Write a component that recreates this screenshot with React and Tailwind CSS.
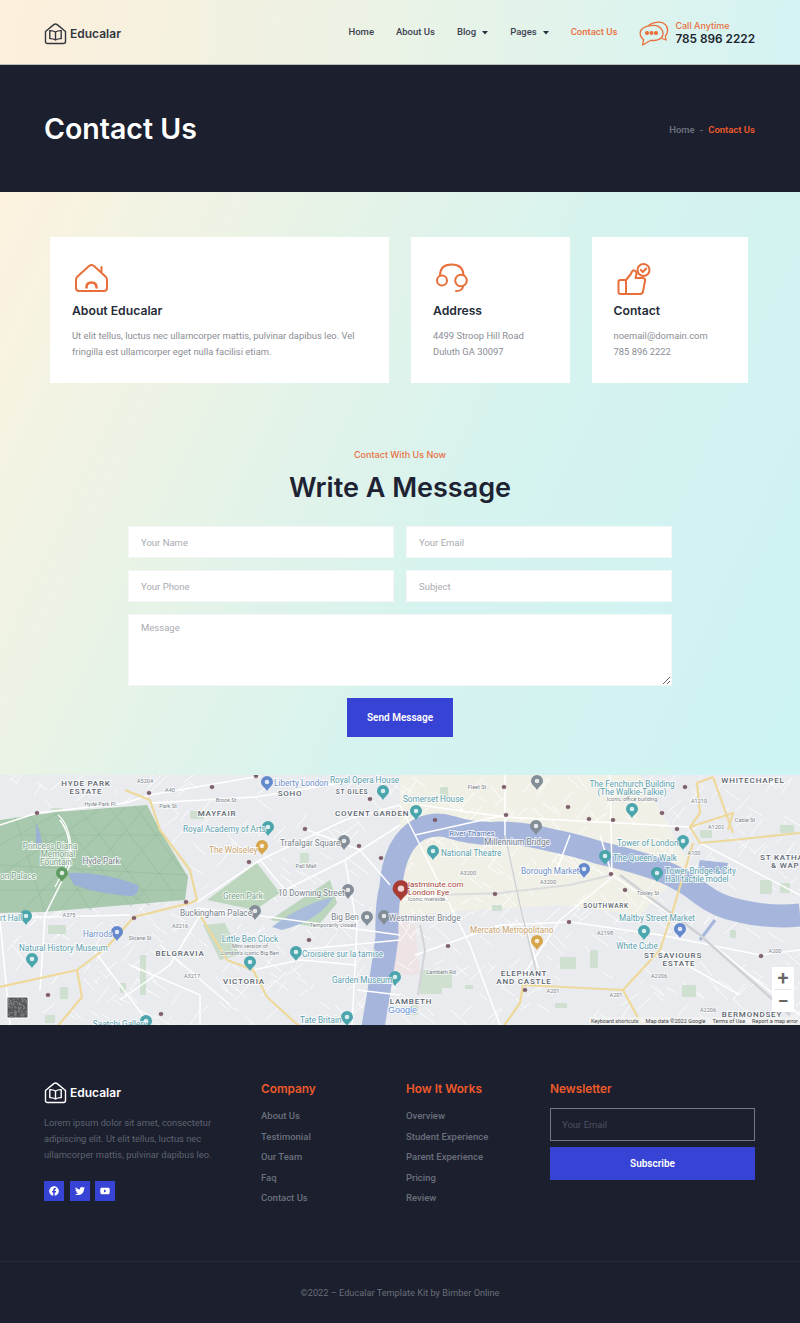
import { FaFacebook, FaTwitter, FaYoutube } from "react-icons/fa";

const ORANGE = "#e96f3a";

function Logo({ color }) {
  return (
    <svg width="23" height="22" viewBox="0 0 23 22" fill="none" stroke={color} strokeWidth="1.4" strokeLinejoin="round" strokeLinecap="round">
      <path d="M1.5 8.5 L9.8 1.6 Q11.5 0.5 13.2 1.6 L21.5 8.5 V18.5 Q21.5 20.5 19.5 20.5 H3.5 Q1.5 20.5 1.5 18.5 Z" />
      <path d="M11.5 9 Q9 7.4 5.8 7.6 V15.6 Q9 15.4 11.5 17 Q14 15.4 17.2 15.6 V7.6 Q14 7.4 11.5 9 V17" />
    </svg>
  );
}

function ChatIcon() {
  return (
    <svg width="30" height="26" viewBox="0 0 30 26" fill="none" stroke={ORANGE} strokeWidth="1.3" strokeLinecap="round" strokeLinejoin="round">
      <path d="M10 4 Q15 0.5 21 1.2 Q28 2.2 28.6 9 Q28.8 12.5 26.3 15 L27 19 L23 17.5" />
      <path d="M12 4.6 Q20 3.6 23.4 9.5 Q25.5 15 20.5 18.2 Q17 20 12 19.3 L3.6 24 L4.6 18.6 Q0.8 15.5 1.2 11.5 Q2 5.6 12 4.6 Z" />
      <circle cx="8" cy="12" r="1.4" fill={ORANGE} />
      <circle cx="12.5" cy="12" r="1.4" fill={ORANGE} />
      <circle cx="17" cy="12" r="1.4" fill={ORANGE} />
    </svg>
  );
}

function HouseIcon() {
  return (
    <svg width="33" height="30" viewBox="0 0 33 30" fill="none" stroke={ORANGE} strokeWidth="2" strokeLinecap="round" strokeLinejoin="round">
      <path d="M2 14 L14 3 Q16.500 1 19 3 L31 14 Q32 15.500 32 17 V25 Q32 28 29 28 H4 Q1 28 1 25 V17 Q1 15.500 2 14 Z" />
      <path d="M26.500 8.500 V4" />
      <path d="M11.500 24.500 Q11.500 19.500 16.500 19.500 Q21.500 19.500 21.500 24.500" strokeWidth="2.600" />
    </svg>
  );
}

function HeadsetIcon() {
  return (
    <svg width="33" height="30" viewBox="0 0 33 30" fill="none" stroke={ORANGE} strokeWidth="2" strokeLinecap="round" strokeLinejoin="round">
      <path d="M4 12.500 Q4 1.500 15.500 1.500 Q27 1.500 27.500 12" />
      <circle cx="6" cy="17.500" r="5" />
      <circle cx="25" cy="17.500" r="5.800" />
      <path d="M27 23.500 Q26.500 28 20 28" />
    </svg>
  );
}

function ThumbIcon() {
  return (
    <svg width="34" height="33" viewBox="0 0 34 33" fill="none" stroke={ORANGE} strokeWidth="2" strokeLinecap="round" strokeLinejoin="round">
      <path d="M9 17 H3.500 Q1.500 17 1.500 19 V29 Q1.500 31 3.500 31 H9 Z" />
      <path d="M9 17 L13.500 11.500 Q15 8 16 7.500 Q19.500 7 19.500 11 L18.500 15 H26 Q28.500 15.500 28 18 L26 28.500 Q25.500 31 23 31 H9" />
      <circle cx="26.500" cy="7" r="6" />
      <path d="M23.800 7 L25.800 9 L29.200 5.500" />
    </svg>
  );
}

function Caret() {
  return (
    <svg width="6" height="4" viewBox="0 0 6 4" className="ml-[6px] inline-block">
      <path d="M0 0 H6 L3 3.500 Z" fill="#2b3040" />
    </svg>
  );
}

// ---- map data, coordinates in px inside the 800x250 map ----
const YELLOW_ROADS = [
  "M125 15 L150 25 L160 55 L190 95 L197 125 L190 128 L134 142 L107 172 L77 195 L0 212",
  "M197 135 L227 185 L253 195 L267 222 L300 252",
  "M77 195 L82 222 L57 252",
  "M713 2 L697 8 L700 38 L690 52 L700 68 L733 65 L800 58",
  "M713 2 L733 58",
  "M693 68 L673 135 L660 175 L623 215 L523 210 L520 228 L503 252",
  "M623 215 L643 252",
  "M690 52 L733 38 L728 55",
];

const WHITE_ROADS = [
  "M0 50 L37 38 L125 28 L150 20 L260 1",
  "M150 28 L255 22 L340 8",
  "M197 127 L260 85 L345 45 L400 30",
  "M260 85 L285 115 L345 85 L400 50",
  "M197 133 L270 142 L400 160",
  "M345 85 L357 150 L352 252",
  "M305 54 L360 75 L390 110",
  "M400 30 L435 100 L470 170 L500 250",
  "M60 45 Q72 60 70 90 L45 140 L40 215",
  "M0 143 L130 140",
  "M0 145 L10 250",
  "M297 175 L400 165",
  "M253 195 L300 185 L357 190",
  "M357 215 L400 220",
  "M505 0 L505 60 L520 130 L540 200",
  "M420 30 L505 42 L620 48 L690 52",
  "M415 60 L505 40",
  "M610 0 L612 100",
  "M570 60 L555 100",
  "M615 100 L560 145 L520 205",
  "M440 120 L500 118 L570 110 L612 100 L700 160 L800 240",
  "M400 125 L440 120",
  "M570 147 L660 160 L760 180 L800 175",
  "M415 180 L500 150 L570 147",
  "M612 100 L600 60",
  "M660 175 L740 220",
  "M700 68 L800 120",
  "M130 190 L200 220 L200 250",
  "M90 170 L150 250",
  "M160 170 L230 230",
  "M200 140 L170 190 L120 225",
];

// thin side streets, same result on every render
function sideStreets() {
  let seed = 42;
  const rnd = () => {
    seed = (seed * 9301 + 49297) % 233280;
    return seed / 233280;
  };
  const out = [];
  for (let i = 0; i < 620; i++) {
    const x = rnd() * 800;
    const y = rnd() * 250;
    const a = rnd() > 0.5 ? 0.5 + rnd() * 0.4 : -1 + rnd() * 0.4;
    const l = 6 + rnd() * 16;
    out.push(`M${x.toFixed(0)} ${y.toFixed(0)} L${(x + l * Math.cos(a)).toFixed(0)} ${(y + l * Math.sin(a)).toFixed(0)}`);
  }
  return out;
}

const SIDE_STREETS = sideStreets();

// speckles for the little satellite thumbnail
function satelliteSpots() {
  let seed = 7;
  const out = [];
  for (let i = 0; i < 70; i++) {
    seed = (seed * 9301 + 49297) % 233280;
    const x = 8 + (seed % 19);
    seed = (seed * 9301 + 49297) % 233280;
    const y = 223 + (seed % 19);
    out.push([x, y, seed % 2 ? "#7d8080" : "#2f3232"]);
  }
  return out;
}

const SAT_SPOTS = satelliteSpots();

const PARK_PATHS = [
  "M15 42 L45 137 M30 40 L90 135 M55 38 L130 130 M80 35 L150 125 M110 33 L175 120 M135 31 L185 100",
  "M147 30 L60 135 M125 33 L20 138 M160 55 L90 135 M175 80 L130 132 M100 34 L0 100 M60 37 L0 70",
  "M0 90 L188 100 M0 115 L186 115 M20 60 L165 60 M60 85 L150 130",
];

const GREEN_BLOCKS = [
  [51, 33, 12, 9], [190, 36, 14, 8], [300, 78, 9, 10], [48, 150, 18, 9], [140, 180, 6, 40], [60, 212, 8, 12],
  [45, 240, 10, 8], [440, 12, 8, 12], [492, 130, 10, 6], [560, 182, 16, 12], [440, 197, 12, 16], [555, 228, 12, 5],
  [590, 175, 8, 18], [760, 105, 12, 14], [780, 108, 10, 10], [682, 210, 14, 12], [700, 55, 12, 8], [780, 50, 14, 8],
  [730, 155, 6, 8], [465, 210, 8, 4], [410, 230, 8, 10], [120, 208, 6, 10], [420, 195, 22, 24],
];

const TUBE = [
  [37, 38], [149, 18], [212, 12], [256, 1], [305, 54], [359, 71], [370, 24], [381, 83], [249, 87], [186, 127],
  [134, 143], [309, 165], [48, 220], [161, 239], [435, 45], [506, 40], [568, 32], [589, 44], [613, 45], [677, 54],
  [685, 12], [611, 99], [495, 119], [569, 147], [448, 171], [525, 215], [761, 181], [504, 12], [662, 38], [625, 115],
];

const TEAL = "#4aa5ad";
const BLUE = "#6488cc";
const GREY = "#838d97";
const GOLD = "#d6a54a";

const PINS = [
  [267, 8, BLUE], [383, 17, TEAL], [268, 53, TEAL], [262, 72, GOLD], [344, 67, GREY], [62, 99, "#5f9c63"],
  [255, 137, GREY], [348, 116, GREY], [367, 143, GREY], [384, 142, GREY], [26, 142, TEAL], [117, 158, BLUE],
  [32, 185, TEAL], [250, 188, TEAL], [296, 178, TEAL], [395, 203, TEAL], [347, 243, TEAL], [146, 247, TEAL],
  [537, 7, GREY], [416, 37, TEAL], [536, 52, GREY], [632, 35, TEAL], [433, 77, TEAL], [584, 95, BLUE],
  [683, 67, TEAL], [605, 82, TEAL], [657, 99, TEAL], [680, 155, BLUE], [644, 157, TEAL], [537, 167, GOLD],
];

// [text, x, y, kind, anchor]
const LABELS = [
  ["HYDE PARK", 86, 11, "area", "middle"], ["ESTATE", 86, 19, "area", "middle"], ["MAYFAIR", 217, 41, "area", "middle"],
  ["SOHO", 290, 21, "area", "middle"], ["ST GILES", 352, 19, "small", "middle"], ["COVENT GARDEN", 335, 41, "area", "start"],
  ["Liberty London", 274, 11, "blue", "start"], ["Royal Opera House", 330, 8, "teal", "start"],
  ["Royal Academy of Arts", 183, 57, "teal", "start"], ["The Wolseley", 209, 78, "gold", "start"],
  ["Trafalgar Square", 280, 71, "grey", "start"], ["Princess Diana", 50, 74, "park", "middle"],
  ["Memorial", 58, 82, "park", "middle"], ["Fountain", 56, 90, "park", "middle"], ["Hyde Park", 101, 89, "grey", "middle"],
  ["on Palace", 0, 104, "park", "start"], ["Green Park", 243, 124, "park", "middle"], ["10 Downing Street", 278, 121, "grey", "start"],
  ["Buckingham Palace", 180, 141, "grey", "start"], ["Big Ben", 345, 145, "grey", "middle"], ["rt Hall", 0, 146, "teal", "start"],
  ["Harrods", 83, 162, "blue", "start"], ["Natural History Museum", 19, 176, "teal", "start"], ["BELGRAVIA", 180, 181, "area", "middle"],
  ["Little Ben Clock", 250, 167, "teal", "middle"], ["Croisière sur la tamise", 302, 182, "teal", "start"], ["VICTORIA", 244, 209, "area", "middle"],
  ["Garden Museum", 332, 208, "teal", "start"], ["Tate Britain", 300, 248, "teal", "start"], ["Saatchi Gallery", 120, 252, "teal", "middle"],
  ["LAMBETH", 411, 229, "area", "middle"], ["Somerset House", 403, 27, "teal", "start"], ["The Fenchurch Building", 632, 12, "teal", "middle"],
  ["(The Walkie-Talkie)", 632, 20, "teal", "middle"], ["WHITECHAPEL", 753, 8, "area", "middle"], ["River Thames", 472, 61, "river", "middle"],
  ["Millennium Bridge", 517, 70, "grey", "middle"], ["National Theatre", 441, 81, "teal", "start"], ["Tower of London", 617, 71, "teal", "start"],
  ["The Queen's Walk", 613, 86, "teal", "start"], ["Borough Market", 521, 99, "blue", "start"], ["Tower Bridge & City", 665, 99, "teal", "start"],
  ["Hall tactile model", 665, 107, "teal", "start"], ["ST KATHA", 760, 85, "area", "start"], ["& WAP", 771, 93, "area", "start"],
  ["lastminute.com", 408, 112, "red", "start"], ["London Eye", 408, 120, "red", "start"], ["SOUTHWARK", 606, 133, "small", "middle"],
  ["Westminster Bridge", 389, 146, "grey", "start"], ["Mercato Metropolitano", 470, 158, "gold", "start"], ["Maltby Street Market", 657, 146, "teal", "middle"],
  ["White Cube", 637, 174, "teal", "middle"], ["ST SAVIOURS", 673, 183, "area", "middle"], ["ESTATE", 679, 191, "area", "middle"],
  ["ELEPHANT", 524, 201, "area", "middle"], ["AND CASTLE", 524, 209, "area", "middle"], ["BERMONDSEY", 752, 242, "area", "middle"],
];

const TINY_LABELS = [
  ["Iconic office building", 632, 26, "middle"], ["Iconic riverside...", 408, 126, "start"], ["Temporarily closed", 333, 152, "middle"],
  ["Mini version of", 250, 173, "middle"], ["London's iconic Big Ben", 250, 180, "middle"], ["A5204", 145, 8, "middle"],
  ["Hyde Park Pl", 100, 31, "middle"], ["Brook St", 226, 27, "middle"], ["Park St", 168, 33, "middle"], ["A40", 170, 17, "middle"],
  ["Pall Mall", 306, 93, "middle"], ["A375", 69, 142, "middle"], ["Sloane St", 140, 165, "middle"], ["A3217", 192, 203, "middle"],
  ["A3216", 180, 153, "middle"], ["Fleet St", 477, 14, "middle"], ["A3200", 468, 100, "middle"], ["A3200", 548, 109, "middle"],
  ["Tooley St", 648, 120, "middle"], ["A200", 775, 178, "middle"], ["A2198", 605, 160, "middle"], ["A201", 553, 218, "middle"],
  ["A201", 616, 222, "middle"], ["A2206", 708, 237, "middle"], ["A2206", 659, 203, "middle"], ["A1202", 716, 54, "middle"],
  ["Cable St", 745, 47, "middle"], ["A100", 694, 80, "middle"], ["A1210", 699, 28, "middle"], ["Lambeth Rd", 441, 199, "middle"],
];

function Pin({ x, y, color, scale = 1 }) {
  return (
    <g transform={`translate(${x} ${y}) scale(${scale})`}>
      <path d="M0 8 C-2 4 -6 3 -6 -1 A6 6 0 1 1 6 -1 C6 3 2 4 0 8 Z" fill={color} />
      <circle cx="0" cy="-1" r="2.300" fill="#fff" fillOpacity="0.8" />
    </g>
  );
}

const LABEL_STYLES = {
  area: { fill: "#5d6670", fontSize: 8, fontWeight: 500, letterSpacing: 0.800 },
  small: { fill: "#5d6670", fontSize: 6.500, fontWeight: 500, letterSpacing: 0.700 },
  teal: { fill: "#5a9fae", fontSize: 8.200 },
  blue: { fill: "#6f8fcb", fontSize: 8.200 },
  gold: { fill: "#c9a36a", fontSize: 8.200 },
  grey: { fill: "#77818b", fontSize: 8.200 },
  park: { fill: "#7aa487", fontSize: 8.200 },
  river: { fill: "#5a76ad", fontSize: 7.500 },
  red: { fill: "#a8453d", fontSize: 8 },
};

function MapView() {
  return (
    <section className="relative h-[250px] overflow-hidden bg-[#e9ebee]">
      <svg width="800" height="250" viewBox="0 0 800 250" className="block font-['Roboto',sans-serif]">
        <path d="M400 0 H640 L690 90 L640 140 L560 130 L480 135 L400 140 Z" fill="#f1f0e6" />
        <path d="M380 140 L415 150 L420 200 L385 200 Z" fill="#efe4e5" />
        {SIDE_STREETS.map((d, i) => (
          <path key={i} d={d} stroke="#fff" strokeWidth="0.800" fill="none" />
        ))}
        {GREEN_BLOCKS.map(([x, y, w, h], i) => (
          <rect key={i} x={x} y={y} width={w} height={h} rx="1" fill="#cfe0d0" />
        ))}
        <path d="M0 45 L57 37 L147 30 L160 55 L188 102 L185 125 L43 137 L0 138 Z" fill="#a9c9ae" />
        <path d="M207 125 L257 88 L280 118 L255 135 Z" fill="#bcd6bd" />
        <path d="M270 145 L330 105 L337 128 L317 152 Z" fill="#bcd6bd" />
        <path d="M203 150 L225 148 L240 180 L220 185 Z" fill="#c9dcca" />
        {PARK_PATHS.map((d, i) => (
          <path key={i} d={d} stroke="#8fb497" strokeWidth="0.500" fill="none" />
        ))}
        <path d="M68 98 Q100 96 138 110 Q140 122 128 121 Q95 118 74 110 Z" fill="#9cb1d6" />
        <path d="M36 48 Q42 60 42 72 L36 72 Z" fill="#9cb1d6" />
        <path d="M58 40 Q72 52 71 82 L55 112" stroke="#fff" strokeWidth="1.200" fill="none" />
        <path d="M272 152 Q300 130 333 122 Q320 145 282 155 Z" fill="#a8bcdb" />
        <path d="M373 252 Q382 200 387 162 Q386 130 391 112 Q392 92 400 75 Q408 60 420 54 Q436 47 450 52 Q476 60 500 58 Q525 58 550 65 Q576 70 600 78 Q632 85 660 95 Q684 105 700 118 Q718 132 740 136 Q770 143 800 140"
          fill="none" stroke="#a6b5dc" strokeWidth="23" />
        <path d="M700 85 L728 88 L725 100 L697 96 Z" fill="#a6b5dc" />
        <path d="M700 165 L715 145" stroke="#a6b5dc" strokeWidth="3" />
        {WHITE_ROADS.map((d, i) => (
          <path key={i} d={d} stroke="#fff" strokeWidth="1.500" fill="none" />
        ))}
        <path d="M440 120 L500 118 L570 110 L612 100" stroke="#d9dbdc" strokeWidth="2" fill="none" />
        <path d="M620 100 L700 160 L790 240" stroke="#cfd2d5" strokeWidth="2.500" fill="none" />
        <path d="M505 60 L520 130 L537 200" stroke="#cfd2d5" strokeWidth="1.500" fill="none" />
        <path d="M420 150 L425 175 L418 220" stroke="#d2d4d7" strokeWidth="2" fill="none" />
        {YELLOW_ROADS.map((d, i) => (
          <path key={i} d={d} stroke="#eed89a" strokeWidth="2.200" fill="none" strokeLinejoin="round" />
        ))}
        {TUBE.map(([x, y], i) => (
          <g key={i}>
            <circle cx={x} cy={y} r="2.200" fill="#8a5a68" fillOpacity="0.85" />
            <rect x={x - 2.200} y={y - 0.400} width="4.400" height="0.800" fill="#4a4f60" />
          </g>
        ))}
        {PINS.map(([x, y, c], i) => (
          <Pin key={i} x={x} y={y} color={c} />
        ))}
        <Pin x={401} y={115} color="#a83b33" scale={1.400} />
        {TINY_LABELS.map(([t, x, y, anchor], i) => (
          <text key={i} x={x} y={y} textAnchor={anchor} fontSize="5.500" fill="#7a8289" stroke="#fff" strokeWidth="1.500" strokeOpacity="0.700" paintOrder="stroke">{t}</text>
        ))}
        {LABELS.map(([t, x, y, kind, anchor], i) => (
          <text key={i} x={x} y={y} textAnchor={anchor} stroke="#fff" strokeWidth="1.800" strokeOpacity="0.800" paintOrder="stroke" {...LABEL_STYLES[kind]}>{t}</text>
        ))}
        <text x="388" y="238" fontSize="9" fontFamily="'Liberation Sans',sans-serif" fill="#5f8dd8" stroke="#fff" strokeWidth="1.500" paintOrder="stroke">Google</text>
        <rect x="7" y="222" width="21" height="21" fill="#55585a" stroke="#fff" />
        {SAT_SPOTS.map(([x, y, c], i) => (
          <rect key={i} x={x} y={y} width="1.500" height="1.500" fill={c} />
        ))}
      </svg>

      {/* map controls */}
      <div className="absolute left-[772px] top-[192px] w-[22px] h-[45px] flex flex-col items-center bg-white text-[#666]">
        <div className="h-[22px] flex items-center text-[20px] leading-none font-medium">+</div>
        <div className="w-[16px] h-px bg-[#e6e6e6]"></div>
        <div className="h-[22px] flex items-center text-[20px] leading-none font-medium">−</div>
      </div>
      <div className="absolute right-[2px] bottom-0 pl-[2px] flex gap-[7px] bg-[#f3f3f3]/70 text-[5.500px] leading-[8px] text-[#444]">
        <span>Keyboard shortcuts</span>
        <span>Map data ©2022 Google</span>
        <span>Terms of Use</span>
        <span>Report a map error</span>
      </div>
    </section>
  );
}

function InfoCard({ icon, title, children }) {
  return (
    <div className="h-[146px] bg-white pl-[22px] pt-[26px]">
      <div className="h-[33px] pl-[3px]">{icon}</div>
      <h3 className="mt-[5px] text-[12.200px] leading-[20px] font-semibold font-['Inter',sans-serif] text-[#262b38]">{title}</h3>
      <div className="mt-[7px] text-[9.400px] leading-[16px] text-[#8a8d94]">{children}</div>
    </div>
  );
}

function FooterLinks({ title, links }) {
  return (
    <div>
      <h4 className="text-[11.800px] leading-[20px] font-semibold font-['Inter',sans-serif] text-[#ee5a2a]">{title}</h4>
      <ul className="mt-[7px]">
        {links.map((l) => (
          <li key={l} className="text-[9.500px] leading-[20.500px] font-medium text-[#6b6f7c]">{l}</li>
        ))}
      </ul>
    </div>
  );
}

function App() {
  const inputClass = "w-full h-[32px] px-[12px] bg-white text-[9.500px] border border-[#f4f7f7] outline-none placeholder:text-[#a9abb0]";

  return (
    <div className="w-[800px] font-['Roboto',sans-serif] bg-[#1b1f2e]">
      <header className="h-[65px] flex items-center justify-between pt-[3px] pl-[44px] pr-[45px] bg-[linear-gradient(95deg,#fdefdb_0%,#eaf3e6_50%,#d4f3f3_100%)] border-b border-[#b8bec0]">
        <div className="flex items-center gap-[3px]">
          <Logo color="#33363f" />
          <span className="text-[12px] font-semibold font-['Inter',sans-serif] text-[#33363f]">Educalar</span>
        </div>
        <div className="flex items-center">
          <nav className="flex items-center gap-[22px] text-[9.500px] font-medium text-[#3d4250] mb-[2px]">
            <a>Home</a>
            <a>About Us</a>
            <a className="flex items-center">Blog<Caret /></a>
            <a className="flex items-center">Pages<Caret /></a>
            <a className="text-[#e9703f]">Contact Us</a>
          </nav>
          <div className="ml-[22px] flex items-center gap-[6px] font-['Inter',sans-serif]">
            <ChatIcon />
            <div>
              <p className="text-[9px] leading-[11px] font-medium text-[#e9703f]">Call Anytime</p>
              <p className="text-[11.800px] leading-[16px] font-semibold text-[#20242f]">785 896 2222</p>
            </div>
          </div>
        </div>
      </header>

      <section className="h-[127px] flex items-center justify-between pl-[44px] pr-[45px] bg-[#1b1f2e]">
        <h1 className="pt-[1px] text-[28.500px] font-semibold font-['Inter',sans-serif] text-white">Contact Us</h1>
        <p className="pt-[3px] text-[9.500px] font-semibold text-[#6b6f7c]">Home<span className="mx-[5px]">-</span><span className="text-[#ee5a2a]">Contact Us</span></p>
      </section>

      <main className="h-[583px] pt-[45px] bg-[linear-gradient(115deg,#fdf2e0_0%,#e9f3e6_28%,#d6f3ef_58%,#cdf3f3_100%)]">
        <div className="ml-[50px] grid grid-cols-[339px_158.500px_156px] gap-[22px]">
          <InfoCard icon={<HouseIcon />} title="About Educalar">
            <p>Ut elit tellus, luctus nec ullamcorper mattis, pulvinar dapibus leo. Vel</p>
            <p>fringilla est ullamcorper eget nulla facilisi etiam.</p>
          </InfoCard>
          <InfoCard icon={<HeadsetIcon />} title="Address">
            <p>4499 Stroop Hill Road</p>
            <p>Duluth GA 30097</p>
          </InfoCard>
          <InfoCard icon={<ThumbIcon />} title="Contact">
            <p>noemail@domain.com</p>
            <p>785 896 2222</p>
          </InfoCard>
        </div>

        <p className="mt-[65px] text-center text-[9px] leading-[14px] font-medium font-['Inter',sans-serif] text-[#e9703f]">Contact With Us Now</p>
        <h2 className="mt-[7px] text-center text-[27px] leading-[38px] font-semibold font-['Inter',sans-serif] text-[#1e2333]">Write A Message</h2>

        <form className="mx-[128px] mt-[19px] grid grid-cols-2 gap-x-[12px] gap-y-[12px]">
          <input className={inputClass} placeholder="Your Name" />
          <input className={inputClass} placeholder="Your Email" />
          <input className={inputClass} placeholder="Your Phone" />
          <input className={inputClass} placeholder="Subject" />
          <textarea className="col-span-2 h-[72px] px-[12px] py-[6px] bg-white text-[9.500px] border border-[#f4f7f7] outline-none placeholder:text-[#a9abb0]" placeholder="Message"></textarea>
          <button type="button" className="col-span-2 justify-self-center w-[106px] h-[39px] bg-[#3643d4] text-white text-[10px] font-semibold">Send Message</button>
        </form>
      </main>

      <MapView />

      <footer className="bg-[#1b1f2e]">
        <div className="h-[236px] pl-[44px] pr-[45px] pt-[54px] grid grid-cols-[217px_145px_144px_205px]">
          <div>
            <div className="mt-[3px] flex items-center gap-[3px]">
              <Logo color="#fff" />
              <span className="text-[12px] font-semibold font-['Inter',sans-serif] text-white">Educalar</span>
            </div>
            <p className="mt-[11px] text-[9.300px] leading-[16px] text-[#5f6370]">
              Lorem ipsum dolor sit amet, consectetur<br />adipiscing elit. Ut elit tellus, luctus nec<br />ullamcorper mattis, pulvinar dapibus leo.
            </p>
            <div className="mt-[18px] flex gap-[5.500px]">
              <a className="w-[20px] h-[20px] flex items-center justify-center bg-[#3643d4] text-white text-[10px]"><FaFacebook /></a>
              <a className="w-[20px] h-[20px] flex items-center justify-center bg-[#3643d4] text-white text-[10px]"><FaTwitter /></a>
              <a className="w-[20px] h-[20px] flex items-center justify-center bg-[#3643d4] text-white text-[10px]"><FaYoutube /></a>
            </div>
          </div>
          <FooterLinks title="Company" links={["About Us", "Testimonial", "Our Team", "Faq", "Contact Us"]} />
          <FooterLinks title="How It Works" links={["Overview", "Student Experience", "Parent Experience", "Pricing", "Review"]} />
          <div>
            <h4 className="text-[11.800px] leading-[20px] font-semibold font-['Inter',sans-serif] text-[#ee5a2a]">Newsletter</h4>
            <input className="mt-[9px] w-full h-[33px] px-[11px] bg-transparent border border-[#73768a] text-[9.500px] outline-none placeholder:text-[#4d5160]" placeholder="Your Email" />
            <button type="button" className="mt-[6px] w-full h-[33px] bg-[#3643d4] text-white text-[10px] font-semibold">Subscribe</button>
          </div>
        </div>
        <div className="h-[62px] flex items-center justify-center border-t border-[#272b39] text-[9.200px] text-[#6a6e78]">
          ©2022 – Educalar Template Kit by Bimber Online
        </div>
      </footer>
    </div>
  );
}

export default App;
